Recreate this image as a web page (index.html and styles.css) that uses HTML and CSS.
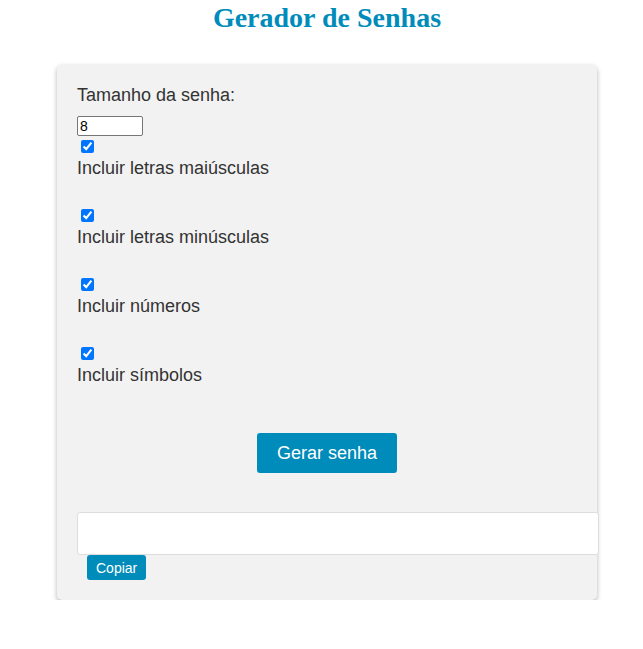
FILE: index.html
```html
<!DOCTYPE html>
<html lang="pt">
<head>
<meta charset="utf-8">
<title>Gerador de Senhas</title>
<link rel="stylesheet" href="styles.css">
</head>
<body>
<div class="page">
  <h1 class="title">Gerador de Senhas</h1>
  <div class="card">
    <label class="lbl" for="len">Tamanho da senha:</label>
    <input class="num" id="len" type="number" value="8">
    <div class="opt">
      <input class="chk" type="checkbox" id="up" checked>
      <label class="lbl" for="up">Incluir letras maiúsculas</label>
    </div>
    <div class="opt">
      <input class="chk" type="checkbox" id="low" checked>
      <label class="lbl" for="low">Incluir letras minúsculas</label>
    </div>
    <div class="opt">
      <input class="chk" type="checkbox" id="num" checked>
      <label class="lbl" for="num">Incluir números</label>
    </div>
    <div class="opt">
      <input class="chk" type="checkbox" id="sym" checked>
      <label class="lbl" for="sym">Incluir símbolos</label>
    </div>
    <div class="actions">
      <button class="btn-main" type="button">Gerar senha</button>
    </div>
    <textarea class="out" readonly></textarea>
    <button class="btn-copy" type="button">Copiar</button>
  </div>
</div>
</body>
</html>
```

FILE: styles.css
```css
html, body {
  margin: 0;
  padding: 0;
  background: #ffffff;
}

body {
  font-family: "Liberation Sans", Arial, sans-serif;
  color: #333333;
}

.page {
  width: 540px;
  margin-left: 57px;
}

.title {
  margin: 2px 0 0;
  text-align: center;
  font-family: "Liberation Serif", "Times New Roman", serif;
  font-size: 28px;
  font-weight: bold;
  color: #008cba;
  line-height: 32px;
}

.card {
  margin-top: 31px;
  padding: 20px;
  background: #f2f2f2;
  border-radius: 5px;
  box-shadow: 0 2px 5px rgba(0, 0, 0, 0.3);
}

.lbl {
  display: block;
  font-size: 18px;
  line-height: 21px;
  color: #333333;
}

.card > .lbl {
  margin-bottom: 10px;
}

.num {
  display: block;
  box-sizing: border-box;
  width: 66px;
  height: 20px;
  margin: 0;
  padding: 1px 2px;
  font-family: "Liberation Sans", Arial, sans-serif;
  font-size: 14px;
  border: 1px solid #767676;
  border-radius: 2px;
  background: #fff;
  color: #000;
}

.opt {
  margin-bottom: 30px;
}

.chk {
  display: block;
  margin: 4px 0 5px 4px;
  width: 13px;
  height: 13px;
  accent-color: #0075ff;
}

.opt .lbl {
  margin: 0;
}

.actions {
  display: flex;
  justify-content: center;
  margin-top: 47px;
}

.btn-main {
  background: #008cba;
  color: #fff;
  border: none;
  border-radius: 3px;
  padding: 0 20px;
  height: 40px;
  font-family: "Liberation Sans", Arial, sans-serif;
  font-size: 18px;
}

.out {
  display: block;
  box-sizing: border-box;
  width: 522px;
  height: 43px;
  margin: 39px 0 0;
  padding: 8px;
  border: 1px solid #dddddd;
  border-radius: 3px;
  background: #fff;
  resize: none;
  font-family: "Liberation Sans", Arial, sans-serif;
  font-size: 16px;
}

.btn-copy {
  display: block;
  margin: 0 0 0 10px;
  height: 25px;
  padding: 0 9px;
  background: #008cba;
  color: #fff;
  border: none;
  border-radius: 3px;
  font-family: "Liberation Sans", Arial, sans-serif;
  font-size: 14px;
}
```
